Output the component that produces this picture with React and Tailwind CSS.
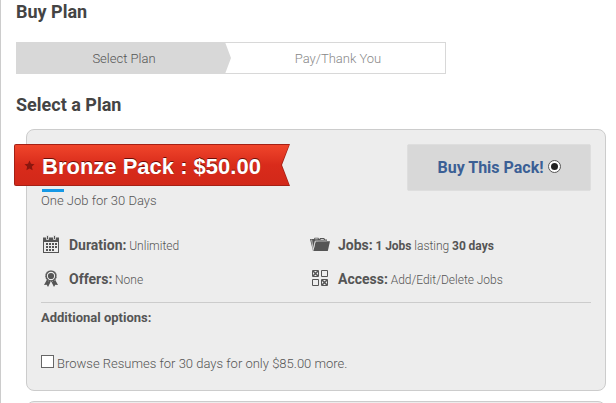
import React, { useState } from "react";

const CalendarIcon = () => (
    <svg width="16" height="18" viewBox="0 0 16 18" fill="#555">
        <path d="M0 2.5h16V18H0z M1 7v10h14V7z" fillRule="evenodd" />
        <path d="M3.5.5h2v4h-2z M10.5.5h2v4h-2z" fill="#555" stroke="#ededed" strokeWidth="0.8" />
        <path d="M3 8h2v2H3z M6 8h2v2H6z M9 8h2v2H9z M12 8h2v2h-2z M3 11h2v2H3z M6 11h2v2H6z M9 11h2v2H9z M12 11h2v2h-2z M3 14h2v2H3z M6 14h2v2H6z M9 14h2v2H9z" />
    </svg>
);

const RosetteIcon = () => (
    <svg width="14" height="17" viewBox="0 0 14 17" fill="#555">
        <path d="M3 9.5 0 15l2.7-.2L4 17l3-6 3 6 1.3-2.2 2.7.2-3-5.5z" />
        <circle cx="7" cy="6" r="5" fill="#ededed" stroke="#555" strokeWidth="1.7" />
        <circle cx="7" cy="6" r="5.6" fill="none" stroke="#ededed" strokeWidth="0.6" strokeDasharray="0.8 1.4" />
        <circle cx="7" cy="6" r="3.1" />
    </svg>
);

const FolderIcon = () => (
    <svg width="20" height="15" viewBox="0 0 20 15" fill="#555">
        <path d="M0 2h4l.6-1.2h3.8L9 2h6v2.5H5L3 14z" />
        <path d="M9 2.8 10 .9h4.2l.8 1.5h2V5H8z" />
        <path d="M10.8 1.9h2.8l.3.9h-3.4z M5.2 1.6h2.6v.7H5z" fill="#ededed" />
        <path d="M5.6 4.2H20L17.8 14H3.4z" />
        <path d="M1.6 2.6 3.2 12.4 5.2 4h11.6" fill="none" stroke="#ededed" strokeWidth="0.7" />
    </svg>
);

const GridIcon = () => (
    <svg width="16" height="16" viewBox="0 0 16 16" fill="none" stroke="#555">
        <path d="M.5.5h6v6h-6z M9.5.5h6v6h-6z M.5 9.5h6v6h-6z M9.5 9.5h6v6h-6z" />
        <path d="M1 1l5 5M6 1 1 6M10 10l5 5M15 10l-5 5" strokeWidth="1.5" />
    </svg>
);

const Feature = ({ icon, label, children }) => (
    <div className="flex h-[34px] items-center">
        <span className="flex w-7 shrink-0 items-center">{icon}</span>
        <span className="whitespace-nowrap text-[12px] font-light leading-[20px] [word-spacing:-0.2px]">
            <span className="text-[14px] font-bold">{label}</span> {children}
        </span>
    </div>
);

const App = () => {
    const [withResumes, setWithResumes] = useState(false);

    return (
        <div className="h-[403px] w-[616px] overflow-hidden border-l border-[#ccc] bg-white pl-[15px] font-['Roboto',sans-serif] text-[#555]">
            <h1 className="h-[42px] text-[18px] font-bold leading-[24px] text-[#444]">Buy Plan</h1>

            {/* Steps */}
            <div className="flex h-8 w-[430px] border border-[#d8d8d8] text-center text-[13px] font-light leading-[34px]">
                <div className="-my-px -ml-px w-[215px] bg-[#d8d8d8] pl-px [clip-path:polygon(0_0,209px_0,100%_50%,209px_100%,0_100%)]">
                    Select Plan
                </div>
                <div className="-my-px flex-1 text-[#888]">Pay/Thank You</div>
            </div>

            <h2 className="mt-[18px] h-[37px] text-[18px] font-bold leading-[25px] text-[#444]">Select a Plan</h2>

            {/* Plan card */}
            <div className="ml-[10px] h-[262px] w-[580px] rounded-[8px] border border-[#ccc] bg-[#ededed] p-[14px]">
                <div className="flex items-start justify-between">
                    <div>
                        {/* Ribbon */}
                        <div className="-ml-[27px] h-[42px] w-[276px] rounded-l-[2px] bg-[#a52015] p-px [clip-path:polygon(0_0,100%_0,268px_50%,100%_100%,0_100%)]">
                            <div className="flex h-10 items-center rounded-l-[1px] bg-linear-to-b from-[#f0452b] via-[#d92b1b] via-50% to-[#d22819] pl-[9px] [clip-path:polygon(0_0,274px_0,266px_50%,274px_100%,0_100%)]">
                                <svg width="11" height="11" viewBox="0 0 11 11">
                                    <path d="M5.5.5 7 3.8l3.5.4-2.6 2.4.7 3.6-3.1-1.8-3.1 1.8.7-3.6L.5 4.2 4 3.8z" fill="#8a160e" />
                                </svg>
                                <span className="ml-[7px] mt-[3px] whitespace-nowrap font-['Liberation_Sans',sans-serif] text-[22px] font-bold leading-[40px] text-white [text-shadow:0_-1px_0_#6b0d07]">
                                    Bronze Pack : $50.00
                                </span>
                            </div>
                        </div>
                        <div className="ml-px mt-[3px] h-[3px] w-[22px] bg-[#1699e6]" />
                        <p className="text-[13px] font-light leading-[18px]">One Job for 30 Days</p>
                    </div>
                    <label className="flex h-[47px] w-[184px] items-center justify-center rounded-[2px] border border-[#dedede] bg-[#d8d8d8] text-[16px] font-bold text-[#3b5f95]">
                        Buy This Pack!
                        <input type="radio" name="plan" defaultChecked className="peer sr-only" />
                        <span className="mb-[2px] ml-1 flex h-[13px] w-[13px] items-center justify-center rounded-full border border-[#555] bg-white">
                            <span className="h-[7px] w-[7px] rounded-full bg-[#222]" />
                        </span>
                    </label>
                </div>

                {/* Features */}
                <div className="mt-[18px] grid h-[75px] grid-cols-[269px_1fr] content-start border-b border-[#ccc]">
                    <Feature icon={<span className="mb-[2px] ml-[2px]"><CalendarIcon /></span>} label="Duration:">Unlimited</Feature>
                    <Feature icon={<span className="mb-[2px]"><FolderIcon /></span>} label="Jobs:">
                        <b className="font-bold">1 Jobs</b> lasting <b className="font-bold">30 days</b>
                    </Feature>
                    <Feature icon={<span className="mb-px ml-[3px]"><RosetteIcon /></span>} label="Offers:">None</Feature>
                    <Feature icon={<span className="mb-[2px] ml-[2px]"><GridIcon /></span>} label="Access:">Add/Edit/Delete Jobs</Feature>
                </div>

                <p className="mt-[5px] text-[13px] font-bold leading-[20px]">Additional options:</p>
                <label className="mt-[26px] flex h-[20px] items-center text-[13px] font-light">
                    <input
                        type="checkbox"
                        checked={withResumes}
                        onChange={(e) => setWithResumes(e.target.checked)}
                        className="mb-[5px] mr-[3px] h-[13px] w-[13px] appearance-none border border-[#666] bg-white checked:bg-[#555]"
                    />
                    Browse Resumes for 30 days for only $85.00 more.
                </label>
            </div>

            {/* Next plan card */}
            <div className="ml-[10px] mt-[10px] h-[60px] w-[580px] rounded-[8px] border border-[#ccc] bg-[#ededed]" />
        </div>
    );
};

export default App;
